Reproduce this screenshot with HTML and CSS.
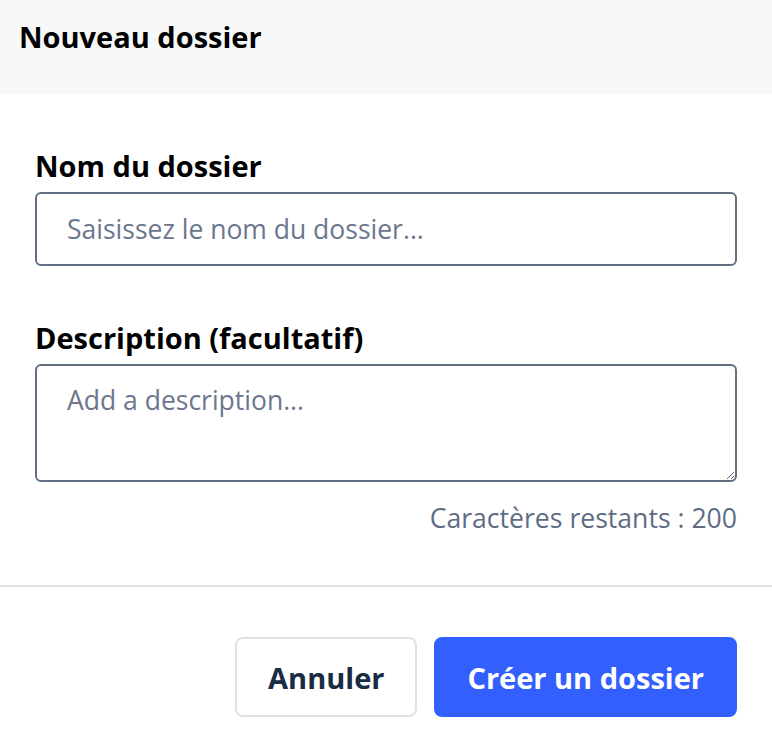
FILE: index.html
```html
<!DOCTYPE html>
<html lang="fr">
<head>
<meta charset="utf-8">
<title>Nouveau dossier</title>
<link rel="stylesheet" href="styles.css">
</head>
<body>
<div class="modal">
  <header class="modal-header">
    <h1 class="modal-title">Nouveau dossier</h1>
  </header>
  <div class="modal-body">
    <div class="field field-name">
      <label class="field-label" for="name">Nom du dossier</label>
      <input class="text-input" id="name" type="text" placeholder="Saisissez le nom du dossier...">
    </div>
    <div class="field">
      <label class="field-label" for="desc">Description (facultatif)</label>
      <textarea class="text-area" id="desc" placeholder="Add a description..."></textarea>
      <div class="counter">Caractères restants : 200</div>
    </div>
  </div>
  <footer class="modal-footer">
    <button class="btn btn-secondary" type="button">Annuler</button>
    <button class="btn btn-primary" type="button">Créer un dossier</button>
  </footer>
</div>
</body>
</html>
```

FILE: styles.css
```css
* {
  box-sizing: border-box;
}

html, body {
  margin: 0;
  padding: 0;
  background: #ffffff;
}

body {
  font-family: "Open Sans", "Liberation Sans", sans-serif;
  color: #000000;
}

.modal {
  width: 772px;
  min-height: 752px;
  display: flex;
  flex-direction: column;
}

.modal-header {
  background: #f7f8fa;
  height: 94px;
  padding: 19px 19px 0;
}

.modal-title {
  margin: 0;
  font-size: 29px;
  line-height: 36px;
  font-weight: 700;
  color: #000000;
}

.modal-body {
  padding: 54px 35px 49px;
}

.field {
  display: flex;
  flex-direction: column;
}

.field-name {
  margin-bottom: 54px;
}

.field-label {
  font-size: 29px;
  line-height: 36px;
  font-weight: 700;
  color: #000000;
  margin-bottom: 8px;
}

.text-input,
.text-area {
  width: 100%;
  border: 2px solid #637083;
  border-radius: 6px;
  font-family: "Open Sans", "Liberation Sans", sans-serif;
  font-size: 26.5px;
  color: #1c2b41;
  background: #ffffff;
  outline: none;
}

.text-input {
  height: 74px;
  padding: 0 30px;
}

.text-area {
  height: 118px;
  padding: 16px 30px;
  line-height: normal;
  display: block;
}

.text-input::placeholder,
.text-area::placeholder {
  color: #6b778c;
  opacity: 1;
}

.counter {
  margin-top: 18px;
  text-align: right;
  font-size: 26.6px;
  line-height: 36px;
  color: #5e6c84;
}

.modal-footer {
  border-top: 2px solid #e1e1e8;
  padding: 50px 35px 35px;
  display: flex;
  justify-content: flex-end;
  gap: 17px;
}

.btn {
  height: 80px;
  padding: 0 31px;
  border: 2px solid transparent;
  border-radius: 8px;
  font-family: "Open Sans", "Liberation Sans", sans-serif;
  font-size: 29px;
  font-weight: 700;
  cursor: pointer;
}

.btn-secondary {
  background: #ffffff;
  border-color: #dfe1e6;
  color: #1a2b44;
}

.btn-primary {
  background: #335fff;
  border-color: #335fff;
  color: #ffffff;
}
```
